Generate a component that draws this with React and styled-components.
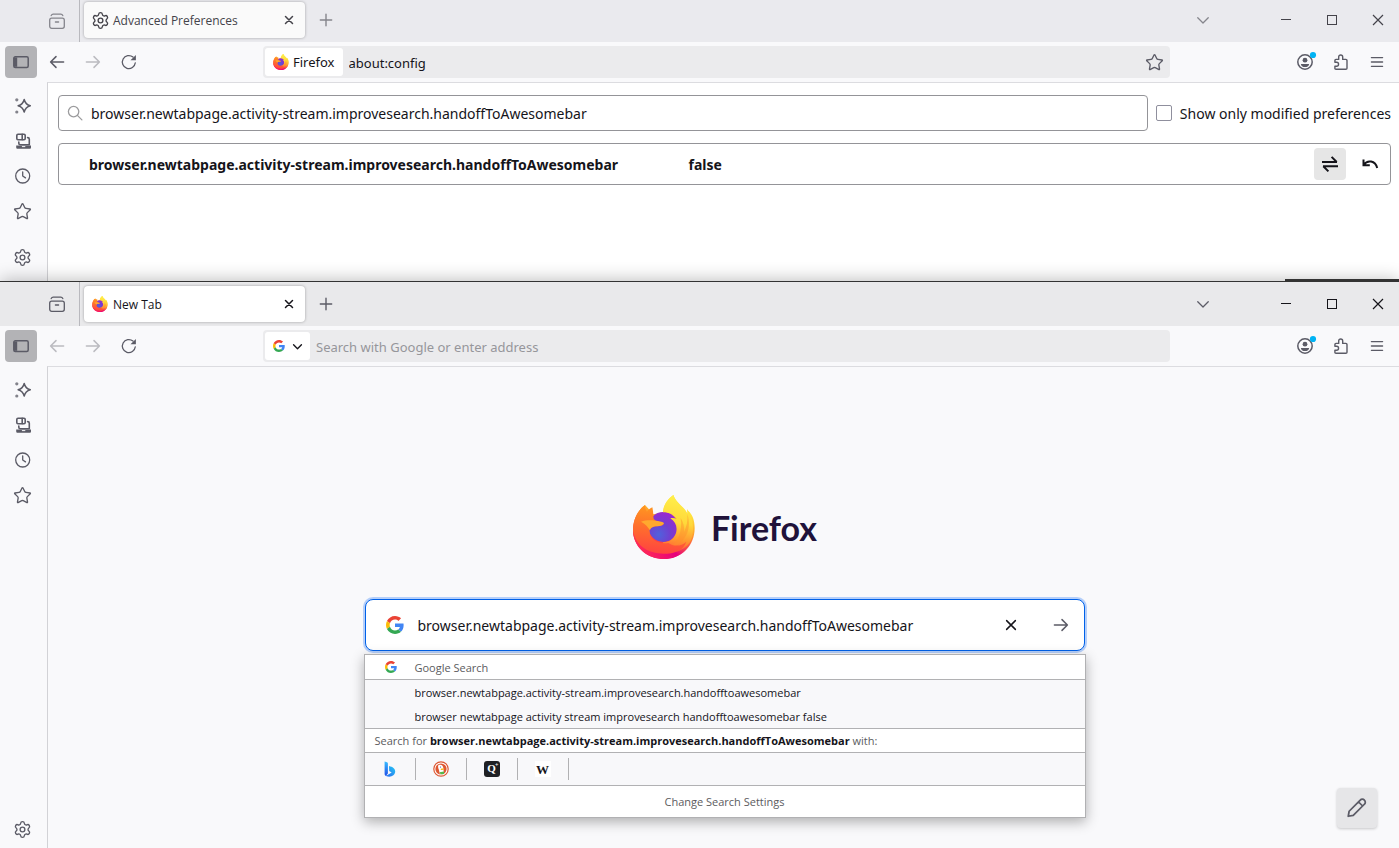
import React from "react";
import styled, { createGlobalStyle } from "styled-components";
import { Settings, Star } from "lucide-react";

const GlobalStyle = createGlobalStyle`
  * { box-sizing: border-box; }
  body {
    margin: 0;
    background: #f9f9fb;
    color: #15141a;
    font-family: "Noto Sans", "Open Sans", sans-serif;
    font-size: 14px;
  }
  button, input {
    font: inherit;
    color: inherit;
    margin: 0;
    padding: 0;
    border: 0;
    background: none;
    outline: none;
  }
  svg { display: block; flex: none; overflow: visible; }
`;

/* ---------- icons ---------- */

const Line = ({ size = 16, width = 1.3, children }) => (
  <svg width={size} height={size} viewBox="0 0 16 16" fill="none" stroke="currentColor" strokeWidth={width} strokeLinecap="round" strokeLinejoin="round" aria-hidden="true">
    {children}
  </svg>
);

const ViewIcon = () => (
  <Line>
    <rect x="0.7" y="5.2" width="14.6" height="10.1" rx="2" />
    <path d="M2.2 2.6C2.7 1.5 3.2 1.1 4.2 1.1h7.6c1 0 1.5.4 2 1.5" />
    <path d="M6.4 9h3.2" />
  </Line>
);
const PanelIcon = () => (
  <Line width={1.5}>
    <rect x="0.8" y="2.8" width="14.4" height="10.6" rx="1.5" />
    <path d="M1 3.4h3.2v9.4H1z" fill="currentColor" stroke="none" />
  </Line>
);
const BackIcon = () => (
  <Line width={1.5}><path d="M14.600 8H1.600M7 2.600 1.600 8 7 13.400" /></Line>
);
const ForwardIcon = () => (
  <Line width={1.5}><path d="M1.400 8h13M9 2.600 14.400 8 9 13.400" /></Line>
);
const ReloadIcon = () => (
  <Line>
    <path d="M14.300 8.800A6.500 6.500 0 1 1 12 3.100" />
    <path d="M14.900 0.900v5.400H9.500z" fill="currentColor" stroke="none" />
  </Line>
);
const CloseIcon = ({ size = 8, width = 3 }) => (
  <Line size={size} width={width}><path d="M1 1l14 14M15 1 1 15" /></Line>
);
const PlusIcon = () => (
  <Line size={14} width={1.6}><path d="M8 1.500v13M1.500 8h13" /></Line>
);
const ChevronIcon = ({ size = 12, width = 1.7 }) => (
  <Line size={size} width={width}><path d="M1 5l7 7 7-7" /></Line>
);
const MinimizeIcon = () => (
  <svg width="10" height="10" viewBox="0 0 10 10" aria-hidden="true"><path d="M0 4h10v1H0z" fill="currentColor" /></svg>
);
const MaximizeIcon = () => (
  <svg width="10" height="10" viewBox="0 0 10 10" aria-hidden="true"><rect x="0.5" y="0.5" width="9" height="9" fill="none" stroke="currentColor" /></svg>
);
const WindowCloseIcon = () => (
  <svg width="10" height="10" viewBox="0 0 10 10" aria-hidden="true"><path d="M0 0l10 10M10 0 0 10" fill="none" stroke="currentColor" strokeWidth="1.200" /></svg>
);
const SparkleIcon = () => (
  <Line width={1.5}>
    <path d="M9.200 1.500c.9 3.800 2.300 5.400 6.100 6.300-3.800 1-5.200 2.500-6.100 6.300-.9-3.800-2.300-5.300-6.100-6.300 3.800-.9 5.200-2.500 6.100-6.300z" />
    <circle cx="1.800" cy="1.800" r="1.600" fill="currentColor" stroke="none" opacity="0.75" />
    <circle cx="1.800" cy="14" r="1.600" fill="currentColor" stroke="none" opacity="0.75" />
  </Line>
);
const SyncedIcon = () => (
  <Line width={1.6}>
    <rect x="1.800" y="1.200" width="8.400" height="5.600" rx="1.200" />
    <path d="M7.200 1.400v5.200M3.800 9v1.200c0 1 .5 1.500 1.500 1.500h9V6.200c0-1-.5-1.600-1.700-1.600" />
    <path d="M1.200 12.400h14.800v1.900c0 1-.5 1.500-1.500 1.500H2.700c-1 0-1.500-.5-1.500-1.500z" fill="currentColor" stroke="none" />
    <path d="M7.300 13.600h2.600" stroke="#f9f9fb" strokeWidth="1" />
  </Line>
);
const ClockIcon = () => (
  <Line><circle cx="7.700" cy="8" r="7" /><path d="M7.700 3.800v4.200l2.800 1.900" /></Line>
);
const AccountIcon = () => (
  <Line width={1.500}>
    <circle cx="8" cy="8" r="7.200" />
    <circle cx="8" cy="6.200" r="2.400" fill="currentColor" stroke="none" />
    <path d="M3.900 9.900h8.200c0 2-1.700 3.100-4.100 3.100s-4.100-1.100-4.100-3.100z" fill="currentColor" stroke="none" />
    <circle cx="16" cy="1" r="3.100" fill="#00b3f4" stroke="none" />
  </Line>
);
const PuzzleIcon = () => (
  <Line width={1.400}>
    <path d="M1.900 8.300V6.500c0-.7.4-1.100 1.100-1.100h2.700V3a2 2 0 0 1 4 0v2.400h3.200c.7 0 1.100.4 1.100 1.100v7.700c0 .7-.4 1.100-1.100 1.100H3c-.7 0-1.100-.4-1.100-1.100v-2h1.700a1.950 1.950 0 0 0 0-3.900z" />
  </Line>
);
const MenuIcon = () => (
  <Line><path d="M2.400 3.600h11.200M2.400 8h11.200M2.400 12.300h11.200" /></Line>
);
const SearchIcon = () => (
  <Line><circle cx="6.600" cy="6.600" r="5.200" /><path d="M10.400 10.400l4.500 4.500" /></Line>
);
const ToggleIcon = () => (
  <svg width="16" height="16" viewBox="0 0 16 16" fill="none" stroke="currentColor" strokeWidth="2" aria-hidden="true">
    <path d="M0 6h15M9.600 0.900 14.700 6M16 10.300H1M1.300 10.300l5.100 5.100" />
  </svg>
);
const UndoIcon = () => (
  <svg width="16" height="16" viewBox="0 0 16 16" fill="none" stroke="currentColor" strokeWidth="2" aria-hidden="true">
    <path d="M1.800 8.600C5.500 3.600 13.200 4.400 15.200 12M1.500 3.400v5.800h6.300" />
  </svg>
);
const PencilIcon = () => (
  <Line size={20} width={1.400}>
    <path d="M1 14.600l.7-4 8.900-8.900a2.200 2.200 0 0 1 3.300 0 2.200 2.200 0 0 1 0 3.300l-8.900 8.900zM9.300 3.200l3.200 3.200" />
  </Line>
);

const GoogleIcon = ({ size }) => (
  <svg width={size} height={size} viewBox="0 0 48 48" aria-hidden="true">
    <path fill="#ea4335" d="M24 9.500c3.540 0 6.710 1.220 9.210 3.600l6.850-6.850C35.900 2.380 30.470 0 24 0 14.620 0 6.510 5.380 2.560 13.220l7.980 6.190C12.430 13.720 17.740 9.500 24 9.500z" />
    <path fill="#4285f4" d="M46.980 24.550c0-1.570-.15-3.090-.38-4.550H24v9.020h12.940c-.58 2.960-2.260 5.480-4.780 7.180l7.730 6c4.510-4.180 7.090-10.360 7.090-17.650z" />
    <path fill="#fbbc05" d="M10.530 28.590c-.48-1.450-.76-2.990-.76-4.590s.27-3.140.76-4.590l-7.980-6.190C.92 16.460 0 20.120 0 24c0 3.880.92 7.540 2.560 10.780l7.970-6.190z" />
    <path fill="#34a853" d="M24 48c6.480 0 11.930-2.130 15.890-5.810l-7.730-6c-2.150 1.450-4.920 2.300-8.160 2.300-6.260 0-11.570-4.220-13.470-9.910l-7.980 6.190C6.510 42.620 14.620 48 24 48z" />
  </svg>
);

const FirefoxLogo = ({ size, id }) => (
  <svg width={size} height={size} viewBox="-3 0 192 192" aria-hidden="true">
    <defs>
      <linearGradient id={`${id}-body`} x1="0.75" y1="0.1" x2="0.3" y2="1">
        <stop offset="0.1" stopColor="#ffe53d" />
        <stop offset="0.34" stopColor="#ffa62b" />
        <stop offset="0.56" stopColor="#ff5a36" />
        <stop offset="0.8" stopColor="#ff2f4a" />
        <stop offset="1" stopColor="#ef0f73" />
      </linearGradient>
      <linearGradient id={`${id}-rim`} x1="0" y1="0.3" x2="1" y2="0">
        <stop offset="0" stopColor="#ff2a55" />
        <stop offset="0.5" stopColor="#e6007d" />
        <stop offset="1" stopColor="#ff8a2b" stopOpacity="0" />
      </linearGradient>
      <radialGradient id={`${id}-globe`} cx="0.35" cy="0.75" r="0.75">
        <stop offset="0" stopColor="#4f62dd" />
        <stop offset="0.5" stopColor="#7040d0" />
        <stop offset="1" stopColor="#9a28cf" />
      </radialGradient>
      <linearGradient id={`${id}-flame`} x1="0.5" y1="0" x2="0.4" y2="1">
        <stop offset="0" stopColor="#fff04a" />
        <stop offset="0.45" stopColor="#ffd83a" />
        <stop offset="0.72" stopColor="#ff9a30" />
        <stop offset="1" stopColor="#ff4a3a" />
      </linearGradient>
      <linearGradient id={`${id}-head`} x1="0.5" y1="0" x2="0.4" y2="1">
        <stop offset="0" stopColor="#ff9a1f" />
        <stop offset="0.45" stopColor="#ff702c" />
        <stop offset="1" stopColor="#ff3f42" />
      </linearGradient>
    </defs>
    <path fill={`url(#${id}-body)`} d="M36 30C10 48-1 82 0 110c3 48 44 82 93 82 52 0 93-42 92-94 0-22-7-40-19-50l-4-6 1 14C154 34 132 28 121 0 104 12 92 32 90 52l-28 6z" />
    <circle cx="91" cy="96" r="45" fill={`url(#${id}-globe)`} />
    <path fill={`url(#${id}-flame)`} d="M121 0c-18 12-30 30-31 52 15-1 31 5 42 20-7-3-14-4-20-2 16 10 22 26 17 44-8 22-24 28-38 27l-21 35c60 14 100-14 108-54 5-28 1-52-12-74l-3 8C152 38 130 26 121 0z" />
    <path fill="#ff8f2c" opacity="0.45" d="M163 57c14 44-2 88-60 108 34-24 46-56 40-96 8 12 12 28 10 42 8-16 12-34 10-54z" />
    <path fill={`url(#${id}-head)`} d="M36 30C10 48-1 82 0 110c4 42 38 74 92 72 34-2 60-18 68-42-16 16-40 14-54 4-36 4-58-14-56-40 4-8 14-11 28-11 10-1 15-4 14-8-8-4-24-6-30-14-2-8 0-18-4-34-8 4-13 8-16 13-4-4-6-12-6-20z" />
    <path fill={`url(#${id}-rim)`} d="M0 106c6 46 46 71 94 70 46 0 82-24 90-66-3 46-42 82-91 82C42 192 2 156 0 106z" />
    <path fill="#ffa92e" d="M24 80c12-4 26-5 42-3 10 1 22 2 27 7-2 5-10 9-20 10-14 0-21 5-22 12-6-10-15-20-27-26z" />
  </svg>
);

const BingIcon = () => (
  <svg width="16" height="16" viewBox="0 0 16 16" aria-hidden="true">
    <defs>
      <linearGradient id="bing-stem" x1="0" y1="0" x2="0" y2="1"><stop offset="0" stopColor="#37bdff" /><stop offset="1" stopColor="#2050e8" /></linearGradient>
      <linearGradient id="bing-bowl" x1="1" y1="0" x2="0" y2="1"><stop offset="0" stopColor="#26c9f4" /><stop offset="1" stopColor="#2a66ee" /></linearGradient>
    </defs>
    <path fill="url(#bing-stem)" d="M2.600 0.500 5 1.300c.6.200.9.700.9 1.300v9.800L3.900 14.800c-.8-.3-1.300-.9-1.300-1.800z" />
    <path fill="url(#bing-bowl)" d="M7 4.900c3.700 1 6.200 2.400 6.200 5.600 0 3-2.800 5.200-5.900 5.200-2 0-3.600-.4-4.400-1.700 1.200.6 2.200.2 3-.3l3.800-2.300-2.500-1.500z" />
  </svg>
);
const DuckIcon = () => (
  <svg width="16" height="16" viewBox="0 0 16 16" aria-hidden="true">
    <circle cx="8" cy="8" r="7.200" fill="#fff" stroke="#de5833" strokeWidth="1.200" />
    <circle cx="8" cy="8" r="5.600" fill="#de5833" />
    <path fill="#fff" d="M5.300 4.200c2.800-1.300 5 .1 5.100 3.200.1 2.300.5 3.700.7 5.100-1.100 1-2.600 1.200-4.100.9L5.800 8.600C5.200 7 4.800 5.400 5.300 4.200z" />
    <circle cx="7.500" cy="6" r="0.600" fill="#2d4f8e" />
    <path fill="#fdb515" d="M7.800 7.800c1.200-.3 2.600-.4 3.500-.2-.2 1-1.700 1.500-3.400 1.500z" />
    <path fill="#55b849" d="M6.500 11.300l4.500-.7v2.400l-3.500.3z" />
  </svg>
);

/* ---------- window chrome ---------- */

const Page = styled.div`
  display: flex;
  flex-direction: column;
  min-height: 100vh;
`;

const BrowserWindow = styled.section`
  position: relative;
  display: flex;
  flex-direction: column;
  background: #f9f9fb;
  ${(p) => p.$front && `
    flex: 1;
    border-top: 1px solid #333;
    box-shadow: 0 -2px 16px rgba(0, 0, 0, 0.24);
  `}
`;

const EdgeMark = styled.div`
  position: absolute;
  top: -3px;
  right: 0;
  width: 114px;
  height: 3px;
  background: #333;
`;

const TabStrip = styled.header`
  display: flex;
  align-items: center;
  padding: ${(p) => (p.$front ? 4 : 2)}px 0 4px;
  background: ${(p) => (p.$front ? "#e9e9eb" : "#eaeaee")};
  color: ${(p) => (p.$front ? "#15141a" : "#44434a")};
`;

const ViewButton = styled.button`
  display: flex;
  align-items: center;
  justify-content: flex-end;
  width: 80px;
  height: ${(p) => (p.$front ? 44 : 42)}px;
  margin: ${(p) => (p.$front ? -4 : -2)}px 4px -4px 0;
  padding-right: 14px;
  border-right: 1px solid #b9b9be;
  color: ${(p) => (p.$front ? "#5b5b66" : "#85858c")};
`;

const Tab = styled.div`
  display: flex;
  align-items: center;
  width: 221px;
  height: 36px;
  padding: 0 6px 0 8px;
  border-radius: 4px;
  background: ${(p) => (p.$front ? "#fff" : "#fafafa")};
  box-shadow: 0 0 3px rgba(0, 0, 0, 0.32);
  font-family: "Open Sans", sans-serif;
  font-size: 12px;
`;

const TabIcon = styled.span`
  display: flex;
  justify-content: center;
  width: 16px;
`;

const TabTitle = styled.span`
  flex: 1;
  margin-left: 5px;
  white-space: nowrap;
`;

const IconButton = styled.button`
  display: flex;
  align-items: center;
  justify-content: center;
  flex: none;
  width: ${(p) => p.$w || 32}px;
  height: ${(p) => p.$h || 32}px;
  border-radius: 4px;
  color: ${(p) => p.$color || "#5b5b66"};
  background: ${(p) => p.$bg || "transparent"};
`;

const StripEnd = styled.div`
  display: flex;
  align-items: center;
  gap: 4px;
  margin-left: auto;
`;

const ListTabs = styled(IconButton)`
  margin-right: 42px;
`;

const Toolbar = styled.nav`
  display: flex;
  align-items: center;
  gap: 4px;
  height: 40px;
  padding: 0 6px 0 5px;
`;

const UrlBar = styled.div`
  display: flex;
  align-items: center;
  flex: 1;
  min-width: 0;
  height: 32px;
  margin: 0 115px 0 114px;
  padding: 0 0 0 2px;
  border-radius: 4px;
  background: #ebebed;
  font-size: 13px;
`;

const Identity = styled.button`
  display: flex;
  align-items: center;
  gap: ${(p) => p.$gap || 4}px;
  height: 28px;
  padding: 0 8px;
  border-radius: 3px;
  background: #fff;
`;

const UrlInput = styled.input`
  flex: 1;
  min-width: 0;
  height: 30px;
  padding: 2px 0 0 6px;
  &::placeholder { color: #96969b; opacity: 1; }
`;

const Body = styled.div`
  display: flex;
  flex: 1;
`;

const Sidebar = styled.aside`
  display: flex;
  flex-direction: column;
  align-items: center;
  gap: 3px;
  width: 47px;
  padding: 8px 2px ${(p) => (p.$front ? 3 : 8)}px 0;
`;

const SidebarEnd = styled.div`
  margin-top: auto;
`;

const Content = styled.main`
  position: relative;
  flex: 1;
  min-width: 0;
  border-top: 1px solid #dcdce0;
  border-left: 1px solid #d2d2d6;
  background: ${(p) => p.$bg};
`;

const lucideProps = { size: 19, strokeWidth: 1.7, "aria-hidden": true };

function Chrome({ front, title, tabIcon, identity, url, placeholder, starred, canGoBack, children }) {
  const ctl = front ? "#15141a" : "#44434a";
  const faint = "#bbbbc0";
  return (
    <BrowserWindow $front={front}>
      {front && <EdgeMark />}
      <TabStrip $front={front}>
        <ViewButton $front={front} aria-label="Firefox View"><ViewIcon /></ViewButton>
        <Tab $front={front}>
          <TabIcon>{tabIcon}</TabIcon>
          <TabTitle>{title}</TabTitle>
          <IconButton $w={20} $h={20} $color={ctl} aria-label="Close tab"><CloseIcon /></IconButton>
        </Tab>
        <IconButton $w={42} $color={front ? "#5b5b66" : "#85858c"} aria-label="New tab"><PlusIcon /></IconButton>
        <StripEnd>
          <ListTabs $color={front ? "#5b5b66" : "#85858c"} aria-label="List all tabs"><ChevronIcon /></ListTabs>
          <IconButton $w={42} $color={ctl} aria-label="Minimize"><MinimizeIcon /></IconButton>
          <IconButton $w={42} $color={ctl} aria-label="Maximize"><MaximizeIcon /></IconButton>
          <IconButton $w={42} $color={ctl} aria-label="Close"><WindowCloseIcon /></IconButton>
        </StripEnd>
      </TabStrip>
      <Toolbar>
        <IconButton $bg="#b3b3b6" aria-label="Sidebar"><PanelIcon /></IconButton>
        <IconButton $color={canGoBack ? undefined : faint} aria-label="Back"><BackIcon /></IconButton>
        <IconButton $color={faint} aria-label="Forward"><ForwardIcon /></IconButton>
        <IconButton aria-label="Reload"><ReloadIcon /></IconButton>
        <UrlBar>
          {identity}
          <UrlInput aria-label="Address" defaultValue={url} placeholder={placeholder} />
          {starred && <IconButton aria-label="Bookmark this page"><Star {...lucideProps} /></IconButton>}
        </UrlBar>
        <IconButton aria-label="Account"><AccountIcon /></IconButton>
        <IconButton aria-label="Extensions"><PuzzleIcon /></IconButton>
        <IconButton aria-label="Menu"><MenuIcon /></IconButton>
      </Toolbar>
      <Body>
        <Sidebar $front={front}>
          <IconButton aria-label="AI chatbot"><SparkleIcon /></IconButton>
          <IconButton aria-label="Tabs from other devices"><SyncedIcon /></IconButton>
          <IconButton aria-label="History"><ClockIcon /></IconButton>
          <IconButton aria-label="Bookmarks"><Star {...lucideProps} /></IconButton>
          <SidebarEnd>
            <IconButton aria-label="Customize sidebar"><Settings {...lucideProps} /></IconButton>
          </SidebarEnd>
        </Sidebar>
        {children}
      </Body>
    </BrowserWindow>
  );
}

/* ---------- about:config ---------- */

const ConfigContent = styled(Content)`
  height: 199px;
  padding: 12px 8px 0 10px;
  overflow: hidden;
`;

const FilterRow = styled.div`
  display: flex;
  align-items: center;
  gap: 8px;
  margin-bottom: 12px;
`;

const FilterBox = styled.div`
  display: flex;
  align-items: center;
  flex: 1;
  gap: 8px;
  height: 36px;
  padding: 0 8px;
  border: 1px solid #949498;
  border-radius: 4px;
  color: #9c9c9e;
`;

const FilterInput = styled.input`
  flex: 1;
  min-width: 0;
  color: #15141a;
`;

const ModifiedLabel = styled.label`
  display: flex;
  align-items: center;
  gap: 8px;
  white-space: nowrap;
`;

const Checkbox = styled.input`
  appearance: none;
  width: 16px;
  height: 16px;
  border: 1px solid #8f8f9d;
  border-radius: 2px;
  background: #fff;
`;

const PrefFrame = styled.div`
  border: 1px solid #949498;
  border-radius: 4px;
`;

const PrefTable = styled.table`
  width: 100%;
  table-layout: fixed;
  border-collapse: collapse;
  text-align: left;
  font-weight: 700;

  th, td { height: 40px; padding: 0; }
  th { width: 47%; padding-left: 30px; }
  td { padding-left: 4px; }
  td:last-child { width: 76px; padding-left: 0; }
`;

const PrefActions = styled.div`
  display: flex;
  gap: 8px;
`;

/* ---------- new tab ---------- */

const NewTabContent = styled(Content)`
  display: flex;
  flex-direction: column;
  align-items: center;
  padding: 128px 0 30px 2px;
`;

const Brand = styled.div`
  display: flex;
  align-items: center;
  gap: 15px;
  height: 64px;
  margin-bottom: 40px;
  color: #20123a;
  font-family: Lato, sans-serif;
  font-size: 34px;
  font-weight: 700;
`;

const SearchArea = styled.div`
  position: relative;
  width: 100%;
  max-width: 720px;
`;

const SearchForm = styled.form`
  display: flex;
  align-items: center;
  height: 52px;
  padding: 0 7px 0 20px;
  border: 1px solid #0061e8;
  border-radius: 8px;
  background: #fff;
  box-shadow: 0 0 0 2px #b5cffa;
`;

const SearchInput = styled.input`
  flex: 1;
  min-width: 0;
  margin-left: 14px;
`;

const SearchActions = styled.div`
  display: flex;
  gap: 18px;
`;

const Suggestions = styled.div`
  position: absolute;
  top: 55px;
  left: -1px;
  right: -1px;
  border: 1px solid #b1b1b3;
  background: #fff;
  box-shadow: 0 4px 12px rgba(0, 0, 0, 0.3);
  font-family: "Open Sans", sans-serif;
  font-size: 11px;
`;

const EngineHeader = styled.div`
  display: flex;
  align-items: center;
  gap: 18px;
  height: 25px;
  padding-left: 20px;
  border-bottom: 1px solid #b1b1b3;
  color: #5b5b5e;
`;

const SuggestionList = styled.ul`
  margin: 0;
  padding: 0;
  list-style: none;
  border-bottom: 1px solid #b1b1b3;
  background: #f8f8fa;
`;

const Suggestion = styled.li`
  height: 24px;
  padding: 2px 0 0 50px;
  line-height: 22px;
`;

const SearchWith = styled.div`
  height: 24px;
  padding-left: 10px;
  border-bottom: 1px solid #b1b1b3;
  color: #5b5b5e;
  line-height: 24px;
  b { color: #15141a; }
`;

const Engines = styled.div`
  display: flex;
  align-items: center;
  height: 33px;
  border-bottom: 1px solid #b1b1b3;
  background: #f8f8fa;
`;

const Engine = styled.button`
  display: flex;
  align-items: center;
  justify-content: center;
  width: 51px;
  height: 22px;
  border-right: 1px solid #b1b1b3;
`;

const QGlyph = styled.span`
  position: relative;
  width: 16px;
  height: 16px;
  border-radius: 3px;
  background: #1f2024;
  color: #fff;
  font: 700 11px/15px "Liberation Serif", serif;
  text-align: center;
  &::after {
    content: "+";
    position: absolute;
    top: 1px;
    right: 1px;
    font-size: 6px;
    line-height: 6px;
  }
`;

const WGlyph = styled.span`
  width: 16px;
  height: 16px;
  background: #fff;
  color: #15141a;
  font: 700 13px/18px "Liberation Serif", serif;
  display: flex;
  justify-content: center;
`;

const SettingsButton = styled.button`
  display: block;
  width: 100%;
  height: 31px;
  color: #5b5b5e;
`;

const CustomizeButton = styled.button`
  position: absolute;
  right: 22px;
  bottom: 20px;
  display: flex;
  align-items: center;
  justify-content: center;
  width: 40px;
  height: 40px;
  border-radius: 4px;
  background: #e6e6e8;
  color: #5b5b66;
  box-shadow: 0 1px 3px rgba(0, 0, 0, 0.2);
`;

const PREF = "browser.newtabpage.activity-stream.improvesearch.handoffToAwesomebar";

export default function App() {
  return (
    <Page>
      <GlobalStyle />
      <Chrome
        title="Advanced Preferences"
        tabIcon={<Settings {...lucideProps} />}
        identity={<Identity><FirefoxLogo size={16} id="chip" />Firefox</Identity>}
        url="about:config"
        starred
        canGoBack
      >
        <ConfigContent $bg="#fff">
          <FilterRow>
            <FilterBox>
              <SearchIcon />
              <FilterInput aria-label="Search preference name" defaultValue={PREF} />
            </FilterBox>
            <ModifiedLabel>
              <Checkbox type="checkbox" />
              Show only modified preferences
            </ModifiedLabel>
          </FilterRow>
          <PrefFrame>
            <PrefTable>
              <tbody>
                <tr>
                  <th scope="row">{PREF}</th>
                  <td>false</td>
                  <td>
                    <PrefActions>
                      <IconButton $bg="#e6e6e6" $color="#15141a" aria-label="Toggle"><ToggleIcon /></IconButton>
                      <IconButton $color="#15141a" aria-label="Reset"><UndoIcon /></IconButton>
                    </PrefActions>
                  </td>
                </tr>
              </tbody>
            </PrefTable>
          </PrefFrame>
        </ConfigContent>
      </Chrome>

      <Chrome
        front
        title="New Tab"
        tabIcon={<FirefoxLogo size={16} id="tab" />}
        identity={<Identity $gap={8} aria-label="Search engine"><GoogleIcon size={12} /><ChevronIcon size={9} width={2.4} /></Identity>}
        placeholder="Search with Google or enter address"
      >
        <NewTabContent $bg="#f9f9fb">
          <Brand><FirefoxLogo size={64} id="brand" />Firefox</Brand>
          <SearchArea>
            <SearchForm>
              <GoogleIcon size={18} />
              <SearchInput aria-label="Search the web" defaultValue={PREF} />
              <SearchActions>
                <IconButton type="button" $color="#15141a" aria-label="Clear"><CloseIcon size={10} width={2.4} /></IconButton>
                <IconButton type="submit" aria-label="Search"><ForwardIcon /></IconButton>
              </SearchActions>
            </SearchForm>
            <Suggestions>
              <EngineHeader><GoogleIcon size={12} />Google Search</EngineHeader>
              <SuggestionList>
                <Suggestion>browser.newtabpage.activity-stream.improvesearch.handofftoawesomebar</Suggestion>
                <Suggestion>browser newtabpage activity stream improvesearch handofftoawesomebar false</Suggestion>
              </SuggestionList>
              <SearchWith>Search for <b>{PREF}</b> with:</SearchWith>
              <Engines>
                <Engine aria-label="Bing"><BingIcon /></Engine>
                <Engine aria-label="DuckDuckGo"><DuckIcon /></Engine>
                <Engine aria-label="Qwant"><QGlyph>Q</QGlyph></Engine>
                <Engine aria-label="Wikipedia"><WGlyph>W</WGlyph></Engine>
              </Engines>
              <SettingsButton>Change Search Settings</SettingsButton>
            </Suggestions>
          </SearchArea>
          <CustomizeButton aria-label="Customize"><PencilIcon /></CustomizeButton>
        </NewTabContent>
      </Chrome>
    </Page>
  );
}
